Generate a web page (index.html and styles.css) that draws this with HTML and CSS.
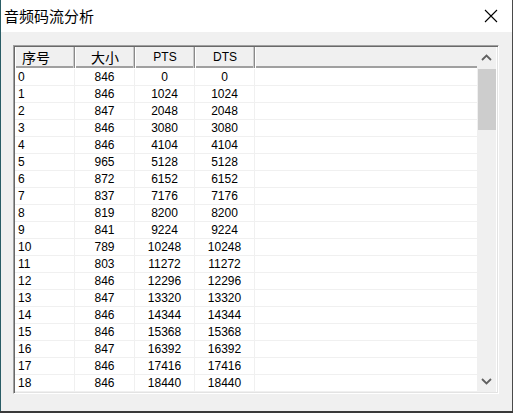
FILE: index.html
```html
<!DOCTYPE html>
<html>
<head>
<meta charset="utf-8">
<link rel="stylesheet" href="styles.css">
</head>
<body>
<div class="window">
  <div class="titlebar">
    <span class="title">音频码流分析</span>
    <svg class="close" width="14" height="14" viewBox="0 0 14 14"><path d="M1 1 L13 13 M13 1 L1 13" stroke="#000" stroke-width="1.1" fill="none"/></svg>
  </div>
  <div class="client">
    <div class="listview">
      <div class="list-main">
        <div class="header">
          <div class="hcell left"><span class="cjk">序号</span></div>
          <div class="hcell"><span class="cjk">大小</span></div>
          <div class="hcell">PTS</div>
          <div class="hcell">DTS</div>
          <div class="hcell filler"></div>
        </div>
        <div class="rows">
          <div class="row"><div class="c left">0</div><div class="c">846</div><div class="c">0</div><div class="c">0</div><div class="c filler"></div></div>
          <div class="row"><div class="c left">1</div><div class="c">846</div><div class="c">1024</div><div class="c">1024</div><div class="c filler"></div></div>
          <div class="row"><div class="c left">2</div><div class="c">847</div><div class="c">2048</div><div class="c">2048</div><div class="c filler"></div></div>
          <div class="row"><div class="c left">3</div><div class="c">846</div><div class="c">3080</div><div class="c">3080</div><div class="c filler"></div></div>
          <div class="row"><div class="c left">4</div><div class="c">846</div><div class="c">4104</div><div class="c">4104</div><div class="c filler"></div></div>
          <div class="row"><div class="c left">5</div><div class="c">965</div><div class="c">5128</div><div class="c">5128</div><div class="c filler"></div></div>
          <div class="row"><div class="c left">6</div><div class="c">872</div><div class="c">6152</div><div class="c">6152</div><div class="c filler"></div></div>
          <div class="row"><div class="c left">7</div><div class="c">837</div><div class="c">7176</div><div class="c">7176</div><div class="c filler"></div></div>
          <div class="row"><div class="c left">8</div><div class="c">819</div><div class="c">8200</div><div class="c">8200</div><div class="c filler"></div></div>
          <div class="row"><div class="c left">9</div><div class="c">841</div><div class="c">9224</div><div class="c">9224</div><div class="c filler"></div></div>
          <div class="row"><div class="c left">10</div><div class="c">789</div><div class="c">10248</div><div class="c">10248</div><div class="c filler"></div></div>
          <div class="row"><div class="c left">11</div><div class="c">803</div><div class="c">11272</div><div class="c">11272</div><div class="c filler"></div></div>
          <div class="row"><div class="c left">12</div><div class="c">846</div><div class="c">12296</div><div class="c">12296</div><div class="c filler"></div></div>
          <div class="row"><div class="c left">13</div><div class="c">847</div><div class="c">13320</div><div class="c">13320</div><div class="c filler"></div></div>
          <div class="row"><div class="c left">14</div><div class="c">846</div><div class="c">14344</div><div class="c">14344</div><div class="c filler"></div></div>
          <div class="row"><div class="c left">15</div><div class="c">846</div><div class="c">15368</div><div class="c">15368</div><div class="c filler"></div></div>
          <div class="row"><div class="c left">16</div><div class="c">847</div><div class="c">16392</div><div class="c">16392</div><div class="c filler"></div></div>
          <div class="row"><div class="c left">17</div><div class="c">846</div><div class="c">17416</div><div class="c">17416</div><div class="c filler"></div></div>
          <div class="row"><div class="c left">18</div><div class="c">846</div><div class="c">18440</div><div class="c">18440</div><div class="c filler"></div></div>
        </div>
      </div>
      <div class="scrollbar">
        <div class="arrow">
          <svg width="11" height="7" viewBox="0 0 11 7"><path d="M1 6 L5.5 1.5 L10 6" stroke="#606060" stroke-width="1.8" fill="none"/></svg>
        </div>
        <div class="track">
          <div class="thumb"></div>
        </div>
        <div class="arrow">
          <svg width="11" height="7" viewBox="0 0 11 7"><path d="M1 1 L5.5 5.5 L10 1" stroke="#606060" stroke-width="1.8" fill="none"/></svg>
        </div>
      </div>
    </div>
  </div>
</div>
</body>
</html>
```
FILE: styles.css
```css
* { box-sizing: border-box; }
html, body { margin: 0; padding: 0; }
body {
  width: 513px;
  height: 413px;
  background: #3a3a3a;
  overflow: hidden;
  font-family: "Liberation Sans", Arial, "Noto Sans CJK SC", sans-serif;
  color: #000;
}
.window {
  width: 513px;
  height: 411px;
  border-left: 1px solid #2a5d66;
  border-right: 1px solid #4a4a4a;
  background: #f0f0f0;
  display: flex;
  flex-direction: column;
}
.titlebar {
  height: 32px;
  background: #fff;
  display: flex;
  align-items: center;
  justify-content: space-between;
  padding: 0 14px 0 3px;
}
.title {
  font-family: "Noto Sans CJK SC", sans-serif;
  font-size: 15px;
  line-height: 16px;
  margin-top: -1px;
}
.close { display: block; margin-top: -1px; }
.client {
  flex: 1;
  padding: 13px 0 0 12px;
}
.listview {
  width: 486px;
  height: 349px;
  border-top: 1px solid #a0a0a0;
  border-left: 1px solid #a0a0a0;
  border-right: 1px solid #fff;
  border-bottom: 1px solid #fff;
  box-shadow: inset 1px 1px 0 #696969, inset -1px -1px 0 #e3e3e3;
  padding: 1px;
  display: flex;
  background: #fff;
}
.list-main {
  flex: 1;
  display: flex;
  flex-direction: column;
  overflow: hidden;
}
.header {
  height: 22px;
  display: grid;
  grid-template-columns: 60px 60px 60px 60px 1fr;
  background: #f0f0f0;
  border-bottom: 1px solid #fff;
  box-shadow: inset 0 -2px 0 #a0a0a0;
  font-size: 12px;
}
.hcell {
  border-right: 1px solid #8a8a8a;
  border-left: 1px solid #fff;
  box-shadow: inset -1px 0 0 #c8c8c8;
  display: flex;
  align-items: center;
  justify-content: center;
  padding-bottom: 2px;
}
.hcell.left { justify-content: flex-start; padding-left: 6px; }
.hcell.filler { border-right: none; box-shadow: none; }
.cjk {
  font-family: "Noto Sans CJK SC", sans-serif;
  font-size: 14px;
  line-height: 16px;
}
.rows { flex: 1; }
.row {
  height: 17px;
  display: grid;
  grid-template-columns: 60px 60px 60px 60px 1fr;
  border-bottom: 1px solid #f0f0f0;
  font-size: 12px;
}
.c {
  border-right: 1px solid #f0f0f0;
  text-align: center;
  line-height: 16px;
}
.c.left { text-align: left; padding-left: 3px; }
.c.filler { border-right: none; }
.scrollbar {
  width: 20px;
  background: #f0f0f0;
  display: flex;
  flex-direction: column;
  border-right: 1px solid #fff;
}
.arrow {
  height: 21px;
  display: flex;
  align-items: center;
  justify-content: center;
}
.arrow svg { display: block; }
.track {
  flex: 1;
  padding: 1px 0 0 1px;
}
.thumb {
  height: 61px;
  background: #cdcdcd;
}
```
